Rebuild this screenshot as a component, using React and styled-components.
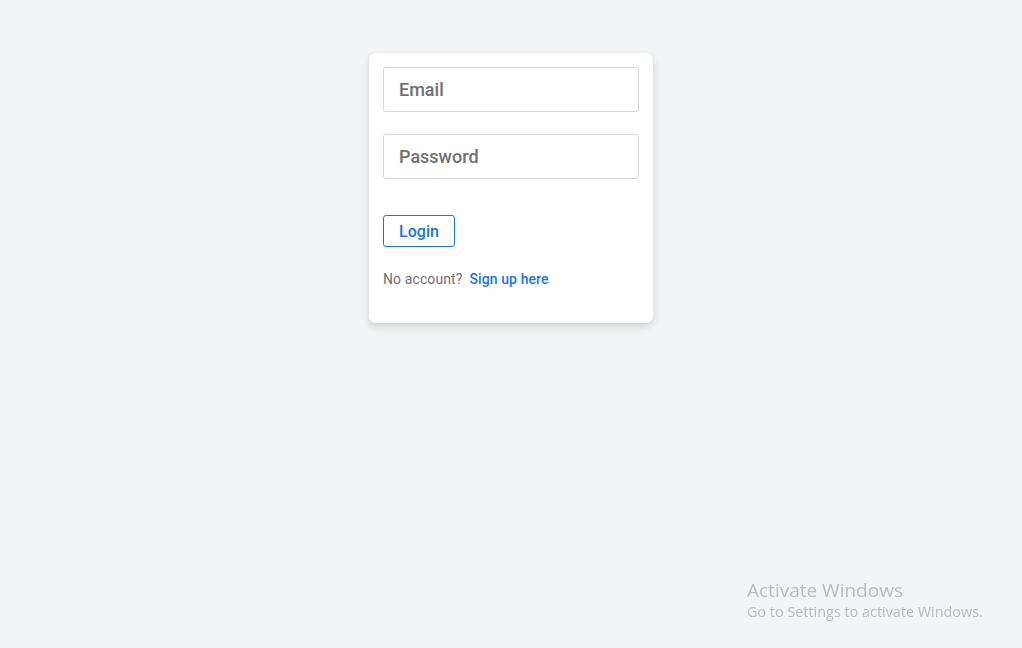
import React from 'react';
import styled, { createGlobalStyle } from 'styled-components';

const GlobalStyle = createGlobalStyle`
  html, body {
    margin: 0;
    padding: 0;
    height: 100%;
    background: #f3f4f6;
    font-family: Roboto, "Liberation Sans", sans-serif;
  }
  #root {
    min-height: 100%;
  }
`;

const Page = styled.div`
  min-height: 648px;
  display: flex;
  justify-content: center;
  align-items: flex-start;
  padding-top: 53px;
  box-sizing: border-box;
`;

const Card = styled.form`
  width: 284px;
  box-sizing: border-box;
  background: #fff;
  border-radius: 7px;
  box-shadow: 0 4px 10px rgba(0, 0, 0, 0.12), 0 1px 3px rgba(0, 0, 0, 0.06);
  padding: 14px 14px 36px;
  display: flex;
  flex-direction: column;
`;

const Input = styled.input`
  height: 45px;
  box-sizing: border-box;
  border: 1px solid #d6d6d6;
  border-radius: 3px;
  padding: 0 15px;
  font-family: Roboto, "Liberation Sans", sans-serif;
  font-size: 18px;
  font-weight: 500;
  color: #333;
  margin-bottom: ${p => p.$gap || 0}px;
  outline: none;
  &::placeholder {
    color: #707070;
  }
`;

const Button = styled.button`
  align-self: flex-start;
  width: 72px;
  height: 32px;
  background: #fff;
  border: 1px solid #1a73e8;
  border-radius: 3px;
  color: #1a73e8;
  font-family: Roboto, "Liberation Sans", sans-serif;
  font-size: 16px;
  font-weight: 500;
  cursor: pointer;
  padding: 0;
`;

const Footer = styled.p`
  margin: 24px 0 0;
  font-size: 14px;
  letter-spacing: 0.1px;
  color: #707070;
  display: flex;
  gap: 7px;
`;

const Link = styled.a`
  color: #1a73e8;
  font-weight: 500;
  text-decoration: none;
`;

const Watermark = styled.div`
  position: fixed;
  left: 747px;
  top: 578px;
  font-family: "Open Sans", "Noto Sans", sans-serif;
  color: #bcbcbf;
  pointer-events: none;
`;

const WatermarkTitle = styled.div`
  font-size: 19px;
  line-height: 24px;
`;

const WatermarkSub = styled.div`
  font-size: 14.4px;
  line-height: 20px;
`;

export default function App() {
  return (
    <>
      <GlobalStyle />
      <Page>
        <Card onSubmit={e => e.preventDefault()}>
          <Input type="email" placeholder="Email" $gap={22} />
          <Input type="password" placeholder="Password" $gap={36} />
          <Button type="submit">Login</Button>
          <Footer>
            <span>No account?</span>
            <Link href="#">Sign up here</Link>
          </Footer>
        </Card>
      </Page>
      <Watermark>
        <WatermarkTitle>Activate Windows</WatermarkTitle>
        <WatermarkSub>Go to Settings to activate Windows.</WatermarkSub>
      </Watermark>
    </>
  );
}
